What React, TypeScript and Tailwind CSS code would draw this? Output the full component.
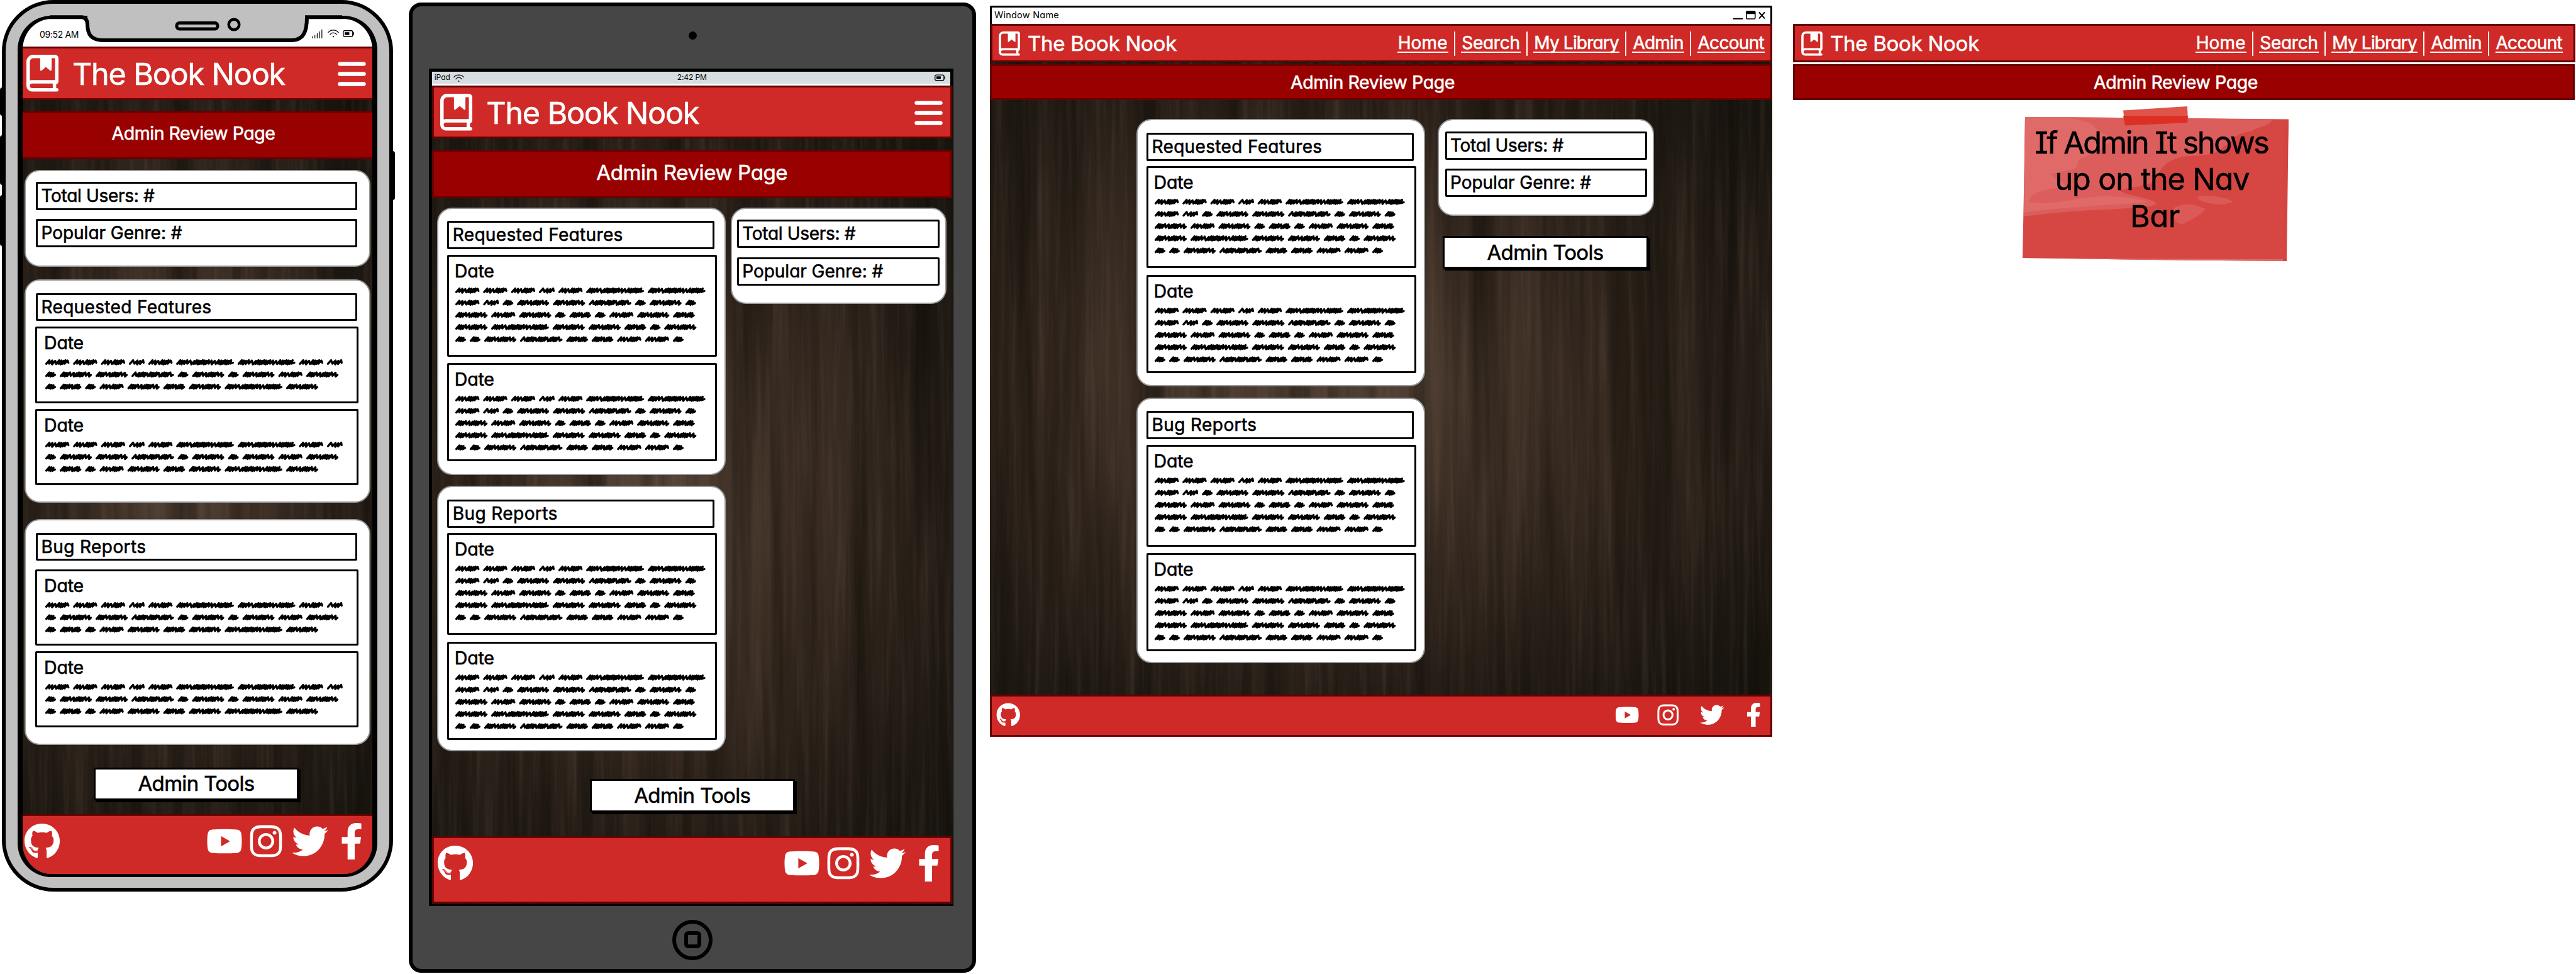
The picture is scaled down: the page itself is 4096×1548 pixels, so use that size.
import { useLayoutEffect, useRef, useState } from "react";
import type { ReactNode } from "react";
import { FaFacebookF, FaGithub, FaInstagram, FaTwitter } from "react-icons/fa";
import { FaBars, FaYoutube } from "react-icons/fa6";

/* Single line of lettering whose tracking is adjusted to a given width. */
function Label({ w, className, children }: { w: number; className: string; children: string }) {
  const ref = useRef<HTMLSpanElement>(null);
  const [tracking, setTracking] = useState(0);
  useLayoutEffect(() => {
    const el = ref.current;
    if (!el) return;
    el.style.letterSpacing = "0px";
    const natural = el.getBoundingClientRect().width;
    const next = (w - natural) / children.length;
    el.style.letterSpacing = `${next}px`;
    setTracking(next);
  }, [w, children]);
  return (
    <span ref={ref} className={`inline-block shrink-0 whitespace-nowrap leading-none ${className}`} style={{ letterSpacing: tracking }}>
      {children}
    </span>
  );
}

const WORDS: Record<string, number> = { A: 38.3, B: 24.8, C: 91.6, D: 16.9, E: 51, F: 67.4, G: 34.4 };
const NARROW = ["AAABACC", "ABDEEFDED", "EAEDGDAEG", "ECEEGDE", "DDEFGGAAD"];
const WIDE = ["AAABACCAB", "DEEFDEDEAE", "DGDAEGECE"];
const STEPS: Record<string, number[]> = {
  A: [4.6, 4.6, 6.5, 3.4, 3.2, 3.2, 3.4],
  B: [7, 4.4, 4.6],
  C: [3.4, 3.2, 4.4, 5, 6.5, 4, 3, 3, 3.2, 3],
  D: [3.2, 3.2, 3.2],
  E: [3.2, 3.2, 3.6, 5.8, 5, 3.4],
  F: [6, 3.2, 3, 3, 3.2],
  G: [3, 3, 3.2, 4, 5],
};

function scribble(x0: number, kind: string) {
  const end = x0 + WORDS[kind] - 1.5;
  const steps = STEPS[kind];
  let x = x0 + 1.6;
  let i = 0;
  let d = `M${x.toFixed(1)} 12.2`;
  while (x + 5 < end) {
    const top = 6.6 + (i % 3) * 0.5;
    const bottom = 12 + ((i * 2) % 3) * 0.5;
    d += `L${(x + 5).toFixed(1)} ${top}`;
    x += steps[i % steps.length];
    i += 1;
    if (x + 2 < end) d += `L${x.toFixed(1)} ${bottom}`;
  }
  return `${d}L${end.toFixed(1)} 10.5`;
}

function Scribbles({ wide }: { wide?: boolean }) {
  const rows = wide ? WIDE : NARROW;
  return (
    <svg className="block overflow-visible" width="490" height={rows.length * 19.35} fill="none" stroke="#000" strokeWidth="3.4" strokeLinecap="round" strokeLinejoin="round">
      {rows.map((row, r) => {
        let x = 0;
        return (
          <g key={r} transform={`translate(0 ${r * 19.35})`}>
            {row.split("").map((kind, k) => {
              const d = scribble(x, kind);
              x += WORDS[kind] + 6.05;
              return <path key={k} d={d} />;
            })}
          </g>
        );
      })}
    </svg>
  );
}

function Wood({ id, className, children }: { id: string; className: string; children?: ReactNode }) {
  return (
    <div className={`relative isolate overflow-hidden bg-[radial-gradient(ellipse_72%_60%_at_44%_50%,#57463a_0%,#403127_35%,#2a211a_70%,#1a1610_100%)] ${className}`}>
      <svg className="absolute inset-0 -z-10 h-full w-full" aria-hidden="true">
        <filter id={`${id}-light`} x="0" y="0" width="100%" height="100%" colorInterpolationFilters="sRGB">
          <feTurbulence type="fractalNoise" baseFrequency="0.13 0.0045" numOctaves="4" seed="7" />
          <feColorMatrix values="0 0 0 0 0.46  0 0 0 0 0.39  0 0 0 0 0.32  1.5 0 0 0 -0.66" />
        </filter>
        <filter id={`${id}-dark`} x="0" y="0" width="100%" height="100%" colorInterpolationFilters="sRGB">
          <feTurbulence type="fractalNoise" baseFrequency="0.03 0.001" numOctaves="5" seed="23" />
          <feColorMatrix values="0 0 0 0 0.05  0 0 0 0 0.04  0 0 0 0 0.02  0 2 0 0 -0.7" />
        </filter>
        <rect width="100%" height="100%" filter={`url(#${id}-light)`} opacity="0.32" />
        <rect width="100%" height="100%" filter={`url(#${id}-dark)`} opacity="0.55" />
      </svg>
      {children}
    </div>
  );
}

function BookIcon({ className }: { className: string }) {
  return (
    <svg viewBox="0 0 448 512" className={`block shrink-0 ${className}`} fill="#fff" fillRule="evenodd">
      <path d="M96 0H400A48 48 0 0 1 448 48V368A48 48 0 0 1 416 413V464H424A24 24 0 0 1 424 512H80A80 80 0 0 1 0 432V96A96 96 0 0 1 96 0ZM192 48H96A48 48 0 0 0 48 96V358A80 80 0 0 1 80 352H392A8 8 0 0 0 400 344V56A8 8 0 0 0 392 48H352V208C352 221 342 228 333 220L272 170L211 220C202 228 192 221 192 208ZM80 400A32 32 0 0 0 80 464H368V400Z" />
    </svg>
  );
}

function Wifi({ className }: { className: string }) {
  return (
    <svg viewBox="0 0 18 13" className={className} fill="none" stroke="#000" strokeWidth="1.3" strokeLinecap="round">
      <path d="M.8 4.600C5 -.3 13 -.3 17.200 4.600M4 7.600C6.600 4.300 11.400 4.300 14 7.600" />
      <circle cx="9" cy="11.200" r="1.100" fill="#000" stroke="none" />
    </svg>
  );
}

function Battery({ className }: { className: string }) {
  return (
    <svg viewBox="0 0 18 11" className={className} fill="none" stroke="#000" strokeWidth="1.400">
      <rect x=".8" y=".8" width="15" height="9.200" rx="2" />
      <rect x="3" y="3.200" width="7.500" height="4.400" fill="#000" stroke="none" />
      <path d="M17.200 3.800V7.200" strokeLinecap="round" />
    </svg>
  );
}

function Card({ className, children }: { className: string; children: ReactNode }) {
  return <section className={`flex flex-col rounded-[24px] border-2 border-[#999] bg-white ${className}`}>{children}</section>;
}

function Field({ className, w, children }: { className: string; w: number; children: string }) {
  return (
    <div className={`shrink-0 rounded-[2px] border-[3px] border-black bg-white pl-[5.500px] pt-[5px] ${className}`}>
      <Label w={w} className="text-[28px]">{children}</Label>
    </div>
  );
}

function Entry({ className, wide }: { className: string; wide?: boolean }) {
  return (
    <article className={`shrink-0 rounded-[2px] border-[3px] border-black bg-white pt-[9px] ${className}`}>
      <Label w={63} className="block text-[28.5px]">Date</Label>
      <div className="ml-[1.500px] mt-[5px]">
        <Scribbles wide={wide} />
      </div>
    </article>
  );
}

function ReportCard({ title, w, className }: { title: string; w: number; className: string }) {
  return (
    <Card className={className}>
      <Field w={w} className="ml-[14px] mt-[19.500px] h-[45px] w-[425px]">{title}</Field>
      <Entry className="ml-[14px] mt-[8.500px] h-[162px] w-[428.500px] pl-[8.500px]" />
      <Entry className="ml-[14px] mt-[10.500px] h-[156px] w-[428.500px] pl-[8.500px]" />
    </Card>
  );
}

function AdminButton({ className }: { className: string }) {
  return (
    <button className={`flex shrink-0 items-center justify-center border-[3px] border-black bg-white shadow-[3px_3px_0_#000] ${className}`}>
      <Label w={185} className="text-[33px]">Admin Tools</Label>
    </button>
  );
}

function MobileHeader({ className }: { className: string }) {
  return (
    <header className={`flex shrink-0 items-start border-[#600] bg-[#cf2a27] pt-[10px] text-white ${className}`}>
      <BookIcon className="h-[58.500px] w-[51px]" />
      <Label w={338} className="ml-[22px] mt-[7px] text-[48.500px]">The Book Nook</Label>
      <FaBars className="ml-auto mt-[5px] h-[51px] w-[51px]" />
    </header>
  );
}

function MobileFooter({ className }: { className: string }) {
  return (
    <footer className={`flex shrink-0 items-start border-[#600] bg-[#cf2a27] pt-[11px] text-white ${className}`}>
      <FaGithub className="size-[58px]" />
      <FaYoutube className="ml-auto size-[58px]" />
      <FaInstagram className="ml-[8px] size-[58px]" />
      <FaTwitter className="ml-[12px] size-[58px]" />
      <FaFacebookF className="ml-[8px] size-[58px]" />
    </footer>
  );
}

const LINKS: [string, number][] = [
  ["Home", 81],
  ["Search", 94.5],
  ["My Library", 136.5],
  ["Admin", 82.5],
  ["Account", 107.5],
];

function DesktopHeader({ className }: { className: string }) {
  return (
    <header className={`flex h-[61px] shrink-0 items-start border-[3px] border-[#600] bg-[#cf2a27] pl-[10px] pt-[9px] text-white ${className}`}>
      <BookIcon className="h-[38.500px] w-[34px]" />
      <Label w={237} className="ml-[12px] mt-[3px] text-[33px]">The Book Nook</Label>
      <nav className="ml-auto flex items-start">
        {LINKS.map(([name, w], i) => (
          <div key={name} className="flex items-start">
            {i > 0 && <i className="mx-[9.300px] h-[38.500px] w-[2px] rounded-full bg-white" />}
            <a className="mt-[3.500px] flex h-[30px] justify-center border-b-[2.500px] border-white" style={{ width: w }}>
              <Label w={w - 2} className="text-[28px]">{name}</Label>
            </a>
          </div>
        ))}
      </nav>
    </header>
  );
}

function TitleBar({ className, children }: { className: string; children: ReactNode }) {
  return <div className={`flex shrink-0 items-start justify-center border-[#600] bg-[#990000] text-white ${className}`}>{children}</div>;
}

function Phone() {
  return (
    <div className="relative h-[1417px] w-[628px] shrink-0">
      <i className="absolute left-0 top-[139px] h-[45px] w-[10px] rounded-[4px] bg-black" />
      <i className="absolute left-0 top-[215px] h-[79px] w-[10px] rounded-[4px] bg-black" />
      <i className="absolute left-0 top-[310px] h-[81px] w-[10px] rounded-[4px] bg-black" />
      <i className="absolute right-0 top-[240px] h-[78px] w-[10px] rounded-[4px] bg-black" />
      <div className="relative ml-[3px] h-[1417px] w-[622px] rounded-[82px] border-[6px] border-black bg-[#c0c0c0] pl-[19px] pt-[18.500px]">
        <div className="flex h-[1369px] w-[572px] flex-col overflow-hidden rounded-[54px] border-x-[8px] border-y-[5.500px] border-black bg-white">
          <div className="flex h-[44.500px] shrink-0 items-start pl-[27px] pr-[29px] pt-[18px]">
            <Label w={62} className="text-[14px] [-webkit-text-stroke:0px]">09:52 AM</Label>
            <svg className="ml-auto mt-[-1px] h-[14px] w-[17px]" viewBox="0 0 17 14" stroke="#000" strokeWidth="1.200">
              <path d="M1 14V10.500M4.700 14V8.500M8.400 14V6M12.100 14V3M15.800 14V0" />
            </svg>
            <Wifi className="ml-[8px] mt-[-1px] h-[13px] w-[18px]" />
            <Battery className="ml-[6px] mt-0 h-[11px] w-[18px]" />
          </div>
          <Wood id="phone" className="flex min-h-0 flex-1 flex-col">
            <MobileHeader className="h-[84.500px] border-y-[3px] pl-[6px] pr-[7px]" />
            <TitleBar className="mt-[17px] h-[77.500px] border-y-[3px] pr-[13px] pt-[19.500px]">
              <Label w={260} className="text-[28.500px]">Admin Review Page</Label>
            </TitleBar>
            <Card className="ml-[2.500px] mt-[16.500px] h-[154px] w-[550px] shrink-0">
              <Field w={180} className="ml-[16.500px] mt-[17.500px] h-[44.500px] w-[511px]">Total Users: #</Field>
              <Field w={224} className="ml-[16.500px] mt-[14.500px] h-[45px] w-[511px]">Popular Genre: #</Field>
            </Card>
            <Card className="ml-[2.500px] mt-[20px] h-[355px] w-[550px] shrink-0">
              <Field w={271} className="ml-[16.500px] mt-[20px] h-[44.500px] w-[511px]">Requested Features</Field>
              <Entry wide className="ml-[15.500px] mt-[9px] h-[121.500px] w-[514px] pl-[11px]" />
              <Entry wide className="ml-[15.500px] mt-[9px] h-[121.500px] w-[514px] pl-[11px]" />
            </Card>
            <Card className="ml-[2.500px] mt-[26.500px] h-[359px] w-[550px] shrink-0">
              <Field w={167} className="ml-[16.500px] mt-[19.500px] h-[44.500px] w-[511px]">Bug Reports</Field>
              <Entry wide className="ml-[15.500px] mt-[13.500px] h-[121.500px] w-[514px] pl-[11px]" />
              <Entry wide className="ml-[15.500px] mt-[8.500px] h-[121.500px] w-[514px] pl-[11px]" />
            </Card>
            <AdminButton className="ml-[113px] mt-[35.500px] h-[52px] w-[326px]" />
            <MobileFooter className="mt-[22px] h-[100px] border-t-[3px] pl-[2px] pr-[4px]" />
          </Wood>
        </div>
      </div>
      <svg className="absolute left-0 top-0 h-[80px] w-[628px]" viewBox="1 0 628 80" fill="none">
        <path d="M140 18V38C140 54 146 64 166 64H466C484 63 489 52 489 18Z" fill="#c0c0c0" />
        <path d="M80 27.300H130Q139 27 140 38C140 56 147 64 166 64H466C484 63 489 50 489 27.300H545" stroke="#000" strokeWidth="6" />
        <rect x="282" y="36.500" width="65" height="9.500" rx="4" stroke="#000" strokeWidth="5" />
        <ellipse cx="373" cy="39" rx="8.300" ry="8.300" stroke="#000" strokeWidth="4.500" />
      </svg>
    </div>
  );
}

function Tablet() {
  return (
    <div className="relative ml-[22px] mt-[3.500px] flex h-[1542px] w-[902px] shrink-0 flex-col items-center rounded-[20px] border-[6px] border-black bg-[#464646]">
      <i className="mt-[40px] size-[13px] shrink-0 rounded-full bg-black" />
      <div className="mr-[4px] mt-[46.300px] flex h-[1331.500px] w-[834.500px] shrink-0 flex-col border-b-[3px] border-l-[5px] border-r-[1.500px] border-t-[5.500px] border-black bg-black">
        <div className="flex h-[22.300px] w-[824px] shrink-0 items-start border-b-[3px] border-white bg-[#d7dee1] pl-[4px] pt-[3px]">
          <Label w={25} className="text-[12px] [-webkit-text-stroke:0px]">iPad</Label>
          <Wifi className="ml-[5px] mt-[1px] h-[13px] w-[17px]" />
          <Label w={47} className="ml-[339px] text-[12px] [-webkit-text-stroke:0px]">2:42 PM</Label>
          <Battery className="ml-auto mr-[8px] mt-[1px] h-[11px] w-[17px]" />
        </div>
        <Wood id="tablet" className="flex min-h-0 flex-1 flex-col">
          <MobileHeader className="h-[83.500px] w-[827px] border-[3px] pl-[10.500px] pr-[9px]" />
          <TitleBar className="mt-[18.500px] h-[76.700px] w-[827px] border-[3px] pt-[16.500px]">
            <Label w={304} className="text-[33px]">Admin Review Page</Label>
          </TitleBar>
          <div className="ml-[8.500px] mt-[15px] flex shrink-0 items-start gap-[8px]">
            <div className="flex flex-col gap-[17px]">
              <ReportCard title="Requested Features" w={271} className="h-[425.500px] w-[458.500px]" />
              <ReportCard title="Bug Reports" w={167} className="h-[422px] w-[458.500px]" />
            </div>
            <Card className="h-[153.500px] w-[343px]">
              <Field w={180} className="ml-[8px] mt-[17px] h-[45.500px] w-[322px]">Total Users: #</Field>
              <Field w={224} className="ml-[8px] mt-[14.500px] h-[45px] w-[322px]">Popular Genre: #</Field>
            </Card>
          </div>
          <AdminButton className="ml-[251px] mt-[44px] h-[52.500px] w-[326px]" />
          <MobileFooter className="mt-[38.500px] h-[106.500px] w-[827px] border-[3px] pl-[5px] pr-[5px]" />
        </Wood>
      </div>
      <div className="mt-[21.500px] flex size-[64px] shrink-0 items-center justify-center rounded-full border-[6px] border-black">
        <i className="size-[27px] rounded-[6px] border-[6px] border-black" />
      </div>
    </div>
  );
}

function Desktop() {
  return (
    <div className="ml-[22px] mt-[9px] flex w-[1244px] shrink-0 flex-col">
      <div className="flex h-[29px] items-start rounded-t-[3px] border-x-[3px] border-t-[3px] border-black bg-white pl-[4px] pt-[5px]">
        <Label w={103} className="text-[14.500px] [-webkit-text-stroke:0px]">Window Name</Label>
        <svg className="ml-auto mr-[8px] mt-0 h-[16px] w-[52px]" viewBox="0 0 52 16" fill="none" stroke="#000">
          <path d="M1.500 12.800H15.500" strokeWidth="2" strokeLinecap="round" />
          <rect x="21.800" y="1" width="14" height="12" rx="1.500" strokeWidth="1.600" />
          <path d="M21.500 3H36" strokeWidth="4.500" />
          <path d="M42.500 3L50.500 11.800M50.500 3L42.500 11.800" strokeWidth="2" strokeLinecap="round" />
        </svg>
      </div>
      <Wood id="desktop" className="flex h-[1132.500px] flex-col">
        <DesktopHeader className="ml-[1px] w-[1243px] pr-[9px]" />
        <TitleBar className="mt-[2.500px] h-[57.500px] w-[1243px] border-[3px] pr-[26px] pt-[12.500px]">
          <Label w={261} className="text-[28.500px]">Admin Review Page</Label>
        </TitleBar>
        <div className="ml-[233px] mt-[30px] flex shrink-0 items-start gap-[20px]">
          <div className="flex flex-col gap-[17.500px]">
            <ReportCard title="Requested Features" w={271} className="h-[425px] w-[459px]" />
            <ReportCard title="Bug Reports" w={167} className="h-[422px] w-[459px]" />
          </div>
          <div className="flex flex-col">
            <Card className="h-[154px] w-[344px]">
              <Field w={180} className="ml-[9.500px] mt-[17.500px] h-[45.500px] w-[321px]">Total Users: #</Field>
              <Field w={224} className="ml-[9.500px] mt-[13.500px] h-[45.500px] w-[321px]">Popular Genre: #</Field>
            </Card>
            <AdminButton className="ml-[7.500px] mt-[32px] h-[52px] w-[327px]" />
          </div>
        </div>
        <footer className="mt-auto flex h-[67px] shrink-0 items-start border-[3px] border-[#600] bg-[#cf2a27] pl-[6.500px] pr-[8px] pt-[10px] text-white">
          <FaGithub className="size-[38.500px]" />
          <FaYoutube className="ml-auto size-[38.500px]" />
          <FaInstagram className="ml-[27px] size-[38.500px]" />
          <FaTwitter className="ml-[31.500px] size-[38.500px]" />
          <FaFacebookF className="ml-[27px] size-[38.500px]" />
        </footer>
      </Wood>
    </div>
  );
}

function StickyNote() {
  return (
    <div className="relative ml-[365px] mt-[27px] flex h-[229px] w-[423px] flex-col items-center pt-[17px] text-black">
      <svg className="absolute left-0 top-[-18px] h-[247px] w-[423px]" viewBox="0 -18 423 247">
        <path d="M4 0L220 1.500L423 3.500L420 120V229L200 227L0 224L2 120Z" fill="#d64743" />
        <path d="M4 0L220 1.500L396 4C396 14 372 16 365 22C330 28 332 42 320 47C310 60 290 60 270 62C225 62 215 90 212 100C200 112 165 110 155 118C170 126 212 130 212 138C205 148 100 144 2 158Z" fill="#dc5e5c" />
        <path d="M4 0H60C110 6 112 12 118 20C130 30 150 32 135 42C120 60 95 62 88 70C90 85 75 84 45 90C50 100 75 105 65 112C20 116 10 125 11 135C50 142 90 126 130 126C170 126 190 132 200 135C170 138 50 144 2 152Z" fill="#e0706d" opacity=".65" />
        <path d="M278 127C290 122 325 127 335 135L318 139C300 139 278 134 278 127ZM240 145C260 134 275 140 291 146C285 156 262 166 255 170C240 170 238 155 240 145Z" fill="#db5a57" />
        <path d="M0 224L200 225L420 226V229L200 227Z" fill="#de6a67" />
        <path d="M414 4H423L420 229H414Z" fill="#d44440" />
        <path d="M160 -10.500L262 -17L263 9L163 13.500Z" fill="#df5349" />
        <path d="M160 -2H263L262 9L163 13.500Z" fill="#dd3025" />
      </svg>
      <Label w={371} className="relative mr-[13px] text-[48.500px]">If Admin It shows</Label>
      <Label w={309} className="relative mr-[11px] mt-[9.800px] text-[48.500px]">up on the Nav</Label>
      <Label w={79} className="relative mr-[2px] mt-[9.800px] text-[48.500px]">Bar</Label>
    </div>
  );
}

export default function App() {
  return (
    <main className="flex h-[1548px] w-[4096px] items-start overflow-hidden bg-white font-['Inter',sans-serif] font-normal text-black [-webkit-text-stroke:0.6px_currentColor] [font-feature-settings:'cv11','cv08']">
      <Phone />
      <Tablet />
      <Desktop />
      <div className="ml-[33px] mt-[38px] flex w-[1244px] shrink-0 flex-col">
        <DesktopHeader className="w-[1244px] pr-[17px]" />
        <TitleBar className="mt-[2.500px] h-[57.500px] w-[1243px] border-[3px] pr-[26px] pt-[12.500px]">
          <Label w={261} className="text-[28.500px]">Admin Review Page</Label>
        </TitleBar>
        <StickyNote />
      </div>
    </main>
  );
}
